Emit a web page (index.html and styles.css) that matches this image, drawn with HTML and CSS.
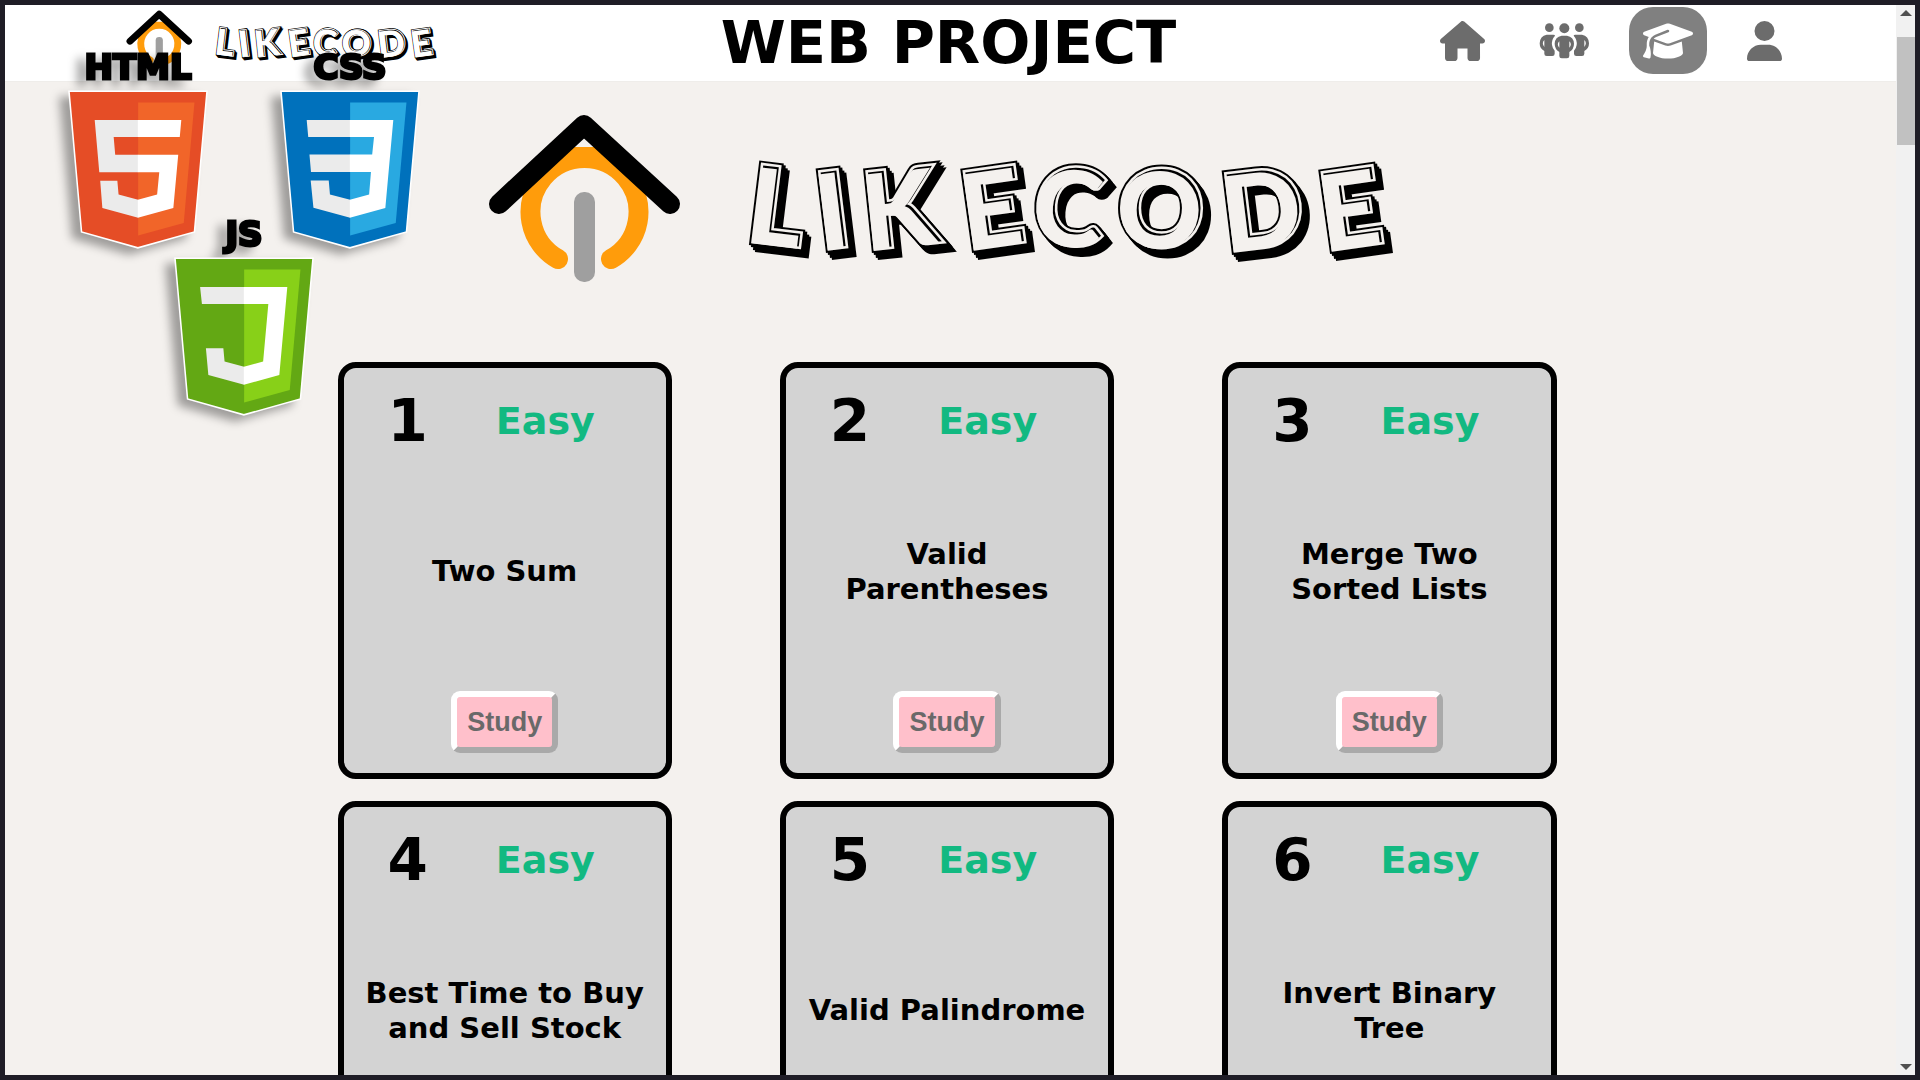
FILE: index.html
```
<!DOCTYPE html>
<html lang="en">
<head>
<meta charset="utf-8">
<meta name="viewport" content="width=device-width, initial-scale=1">
<title>LikeCode - Web Project</title>
<link rel="stylesheet" href="styles.css">
</head>
<body>
<svg class="sprite" aria-hidden="true">
  <defs>
    <text id="word" x="257 333 379 479 543 630 739 837" y="130 139 139 139 131 136 141 140" rotate="7 -7 -6 -8 5 0 -7 -8">LIKECODE</text>
    <symbol id="logo" viewBox="0 0 904 175">
      <path d="M84 37H106L150 78H40z" fill="#ff9c0b"/>
      <circle class="paper" cx="95" cy="101" r="46"/>
      <path d="M69 149A54 54 0 1 1 122 149" fill="none" stroke="#ff9c0b" stroke-width="20" stroke-linecap="round"/>
      <path d="M10 94 95 15 181 94" fill="none" stroke="#000" stroke-width="20" stroke-linecap="round" stroke-linejoin="round"/>
      <rect x="85" y="82" width="21" height="90" rx="10" fill="#9f9f9f"/>
      <g class="word">
        <use class="word-edge" href="#word" x="6" y="7"/>
        <use class="word-edge" href="#word" x="4" y="5"/>
        <use class="word-edge" href="#word" x="2" y="2"/>
        <use class="word-edge" href="#word"/>
        <use class="word-face" href="#word"/>
        <use class="word-line" href="#word"/>
        <use class="word-fill" href="#word" x="-2" y="2"/>
      </g>
    </symbol>
  </defs>
</svg>

<div class="window">
  <div class="page">
    <header class="topbar">
      <a class="brand" href="#" aria-label="LikeCode"><svg class="brand-logo"><use href="#logo"/></svg></a>
      <h1 class="title">WEB PROJECT</h1>
      <nav class="menu">
        <a class="menu-item" href="#" aria-label="Home"><svg width="45" height="40" viewBox="0 0 576 512"><path d="M575.8 255.5c0 18-15 32.1-32 32.1h-32l.7 184.4c0 22.1-17.9 40-40 40H392c-22.1 0-40-17.9-40-40V352H224v120c0 22.1-17.900 40-40 40h-80c-22.1 0-40-17.9-40-40V287.6H32c-18 0-32-14-32-32.1 0-9 3-17 10-24L266.4 8c7-7 15-8 22-8s15 2 21 7l255.4 224.500c8 7 12 15 11 24z"/></svg></a>
        <a class="menu-item" href="#" aria-label="Community"><svg width="50" height="40" viewBox="0 0 150 120">
          <circle cx="31" cy="20" r="13"/><circle cx="76" cy="22" r="15"/><circle cx="121" cy="20" r="13"/>
          <path fill-rule="evenodd" d="M23 41H43Q48 41 48 44Q37 56 39 72Q41 84 47 89V98Q47 105 40 105H23Q16 105 16 98V90Q2 83 2 67Q3 44 23 41zM16 57Q7 66 16 78z"/>
          <path fill-rule="evenodd" d="M129 41H109Q104 41 104 44Q115 56 113 72Q111 84 105 89V98Q105 105 112 105H129Q136 105 136 98V90Q150 83 150 67Q149 44 129 41zM136 57Q145 66 136 78z"/>
          <path fill-rule="evenodd" d="M68 44H84Q104 47 105 68Q105 84 91 93V105Q91 112 84 112H68Q61 112 61 105V93Q47 84 47 68Q48 47 68 44zM61 61Q52 70 61 80zM91 61V80Q100 70 91 61z"/>
        </svg></a>
        <a class="menu-item is-active" href="#" aria-label="Study" aria-current="page"><svg width="50" height="40" viewBox="0 0 640 512"><path d="M320 32c-8.100 0-16.100 1.400-23.700 4.100L15.800 137.400C6.300 140.900 0 149.900 0 160s6.300 19.100 15.800 22.600l57.900 20.900C57.300 229.300 48 259.800 48 291.900v28.100c0 28.400-10.800 57.700-22.300 80.800-6.500 13-13.900 25.800-22.500 37.600C0 442.700-.9 448.300.9 453.400s6 8.900 11.200 10.200l64 16c4.200 1.100 8.700.3 12.400-2s6.300-6.100 7.100-10.400c8.600-42.800 4.300-81.200-2.100-108.700C90.300 344.300 86 329.800 80 316.500V291.900c0-30.200 10.200-58.700 27.900-81.500 12.900-15.500 29.600-28 49.200-35.700l157-61.700c8.200-3.200 17.500.8 20.700 9s-.8 17.500-9 20.700l-157 61.700c-12.400 4.900-23.300 12.400-32.200 21.600l159.600 57.600c7.600 2.700 15.600 4.100 23.700 4.100s16.100-1.400 23.700-4.100L624.200 182.600c9.500-3.400 15.800-12.500 15.800-22.600s-6.300-19.100-15.800-22.600L343.700 36.100C336.100 33.400 328.100 32 320 32zM128 408c0 35.300 86 72 192 72s192-36.700 192-72L496.700 262.600 354.500 314c-11.100 4-22.800 6-34.500 6s-23.500-2-34.500-6L143.300 262.600 128 408z"/></svg></a>
        <a class="menu-item" href="#" aria-label="Profile"><svg width="35" height="40" viewBox="0 0 448 512"><path d="M224 256A128 128 0 1 0 224 0a128 128 0 1 0 0 256zm-45.700 48C79.800 304 0 383.800 0 482.300 0 498.700 13.300 512 29.700 512H418.300c16.400 0 29.700-13.300 29.700-29.700C448 383.800 368.200 304 269.700 304H178.300z"/></svg></a>
      </nav>
    </header>

    <div class="badges">
      <figure class="badge badge-html">
        <figcaption>HTML</figcaption>
        <svg viewBox="30 0 451 512" aria-hidden="true">
          <path class="rim" d="M71 460 30 0H481L440 460 255 512z" fill="#e54d26"/>
          <path d="M256 472 405 431 440 37H256z" fill="#f16529"/>
          <path d="M256 208H181L176 150H256V94H114L129 265H256zM256 355 192 338 188 293H132L139 382 256 414z" fill="#ebebeb"/>
          <path d="M255 208V265H325L318 338 255 355V414L371 382 387 208zM255 94V150H392L397 94z" fill="#fff"/>
        </svg>
      </figure>
      <figure class="badge badge-js">
        <figcaption>JS</figcaption>
        <svg viewBox="30 0 451 512" aria-hidden="true">
          <path class="rim" d="M71 460 30 0H481L440 460 255 512z" fill="#63a814"/>
          <path d="M256 472 405 431 440 37H256z" fill="#88d018"/>
          <path d="M256 94H112L118 150H256zM256 355 192 338 188 294H131L139 382 256 414z" fill="#ebebeb"/>
          <path d="M255 94H397L371 382 255 414V355L318 338 335 150H255z" fill="#fff"/>
        </svg>
      </figure>
      <figure class="badge badge-css">
        <figcaption>CSS</figcaption>
        <svg viewBox="30 0 451 512" aria-hidden="true">
          <path class="rim" d="M71 460 30 0H481L440 460 255 512z" fill="#0071bc"/>
          <path d="M256 472 405 431 440 37H256z" fill="#29a9e1"/>
          <path d="M256 94H114L119 150H256zM256 207H123L128 264H256zM256 355 190 338 186 292H127L136 381 256 414z" fill="#ebebeb"/>
          <path d="M255 94H397L371 382 255 414V355L318 338 324 264H255V207H328L334 150H255z" fill="#fff"/>
        </svg>
      </figure>
    </div>

    <main>
      <section class="hero"><svg class="hero-logo" role="img" aria-label="LikeCode"><use href="#logo"/></svg></section>
      <section class="cards">
        <article class="card">
          <div class="card-head"><span class="number">1</span><span class="level">Easy</span></div>
          <h2 class="card-title">Two Sum</h2>
          <button class="study" type="button">Study</button>
        </article>
        <article class="card">
          <div class="card-head"><span class="number">2</span><span class="level">Easy</span></div>
          <h2 class="card-title">Valid Parentheses</h2>
          <button class="study" type="button">Study</button>
        </article>
        <article class="card">
          <div class="card-head"><span class="number">3</span><span class="level">Easy</span></div>
          <h2 class="card-title">Merge Two Sorted Lists</h2>
          <button class="study" type="button">Study</button>
        </article>
        <article class="card">
          <div class="card-head"><span class="number">4</span><span class="level">Easy</span></div>
          <h2 class="card-title">Best Time to Buy and Sell Stock</h2>
          <button class="study" type="button">Study</button>
        </article>
        <article class="card">
          <div class="card-head"><span class="number">5</span><span class="level">Easy</span></div>
          <h2 class="card-title">Valid Palindrome</h2>
          <button class="study" type="button">Study</button>
        </article>
        <article class="card">
          <div class="card-head"><span class="number">6</span><span class="level">Easy</span></div>
          <h2 class="card-title">Invert Binary Tree</h2>
          <button class="study" type="button">Study</button>
        </article>
      </section>
    </main>
  </div>
  <div class="scrollbar" aria-hidden="true">
    <span class="arrow arrow-up"></span>
    <span class="thumb"></span>
    <span class="arrow arrow-down"></span>
  </div>
</div>
</body>
</html>
```

FILE: styles.css
```
* {
  box-sizing: border-box;
}

body {
  margin: 0;
  background: #1f1d26;
  color: #000;
  font-family: Verdana, "DejaVu Sans", sans-serif;
}

.sprite {
  position: absolute;
  width: 0;
  height: 0;
}

.window {
  display: flex;
  height: 100vh;
  padding: 5px;
}

.page {
  --paper: #f4f1ee;
  position: relative;
  flex: 1;
  min-width: 0;
  overflow: hidden;
  background: var(--paper);
}

/* Top bar */
.topbar {
  --paper: #fff;
  display: grid;
  grid-template-columns: 1fr auto 1fr;
  align-items: start;
  height: 77px;
  padding: 2px 100px 0 96px;
  background: #fff;
  border-bottom: 1px solid #efedea;
}

.brand {
  padding: 2px 0 0 24px;
}

.brand-logo {
  display: block;
  width: 313px;
  height: 60px;
}

.title {
  margin: 0;
  font-size: 59px;
  line-height: 72px;
}

.menu {
  display: flex;
  justify-content: flex-end;
  gap: 26px;
}

.menu-item {
  display: flex;
  align-items: center;
  height: 67px;
  padding: 0 14px;
  border-radius: 24px;
  fill: #6c6c6c;
}

.menu-item.is-active {
  background: #808080;
  fill: #fff;
}

/* Logo wordmark */
.paper {
  fill: var(--paper);
}

.word {
  font-family: Lato, sans-serif;
  font-size: 105px;
  font-weight: 900;
}

.word-edge {
  fill: #000;
  stroke: #000;
  stroke-width: 9px;
}

.word-face {
  fill: var(--paper);
  stroke: var(--paper);
  stroke-width: 5px;
}

.word-line {
  fill: #000;
}

.word-fill {
  fill: var(--paper);
}

/* Technology shields, floating over the top bar and the hero */
.badges {
  position: absolute;
  top: 49px;
  left: 64px;
  display: grid;
  grid-template-columns: 106px 106px 138px;
  align-items: start;
  pointer-events: none;
}

.badge {
  grid-row: 1;
  width: 138px;
  margin: 0;
  filter: drop-shadow(-9px 6px 5px rgba(0, 0, 0, 0.35));
}

.badge-html {
  grid-column: 1;
}

.badge-js {
  grid-column: 2;
  margin-top: 167px;
}

.badge-css {
  grid-column: 3;
}

.badge figcaption {
  margin-bottom: 11px;
  font-family: "DejaVu Sans", sans-serif;
  font-size: 34px;
  font-weight: 700;
  line-height: 26px;
  text-align: center;
  -webkit-text-stroke: 3px #000;
}

.badge svg {
  display: block;
  width: 138px;
  height: 157px;
  overflow: visible;
}

.rim {
  stroke: #fff;
  stroke-width: 5px;
}

/* Hero */
.hero {
  display: flex;
  justify-content: center;
  padding: 28px 19px 77px 0;
}

.hero-logo {
  width: 904px;
  height: 175px;
}

/* Problem cards */
.cards {
  display: grid;
  grid-template-columns: repeat(3, 1fr);
  gap: 22px 108px;
  max-width: 1226px;
  margin: 0 auto;
  padding-right: 7px;
}

.card {
  display: flex;
  flex-direction: column;
  align-items: center;
  min-height: 417px;
  padding: 18px 16px 20px;
  background: #d3d3d3;
  border: 6px solid #000;
  border-radius: 18px;
}

.card-head {
  display: flex;
  align-items: center;
  gap: 68px;
  align-self: stretch;
  height: 70px;
  padding-left: 28px;
  font-weight: 700;
}

.number {
  font-size: 58px;
}

.level {
  color: #12b981;
  font-size: 38px;
}

.card-title {
  display: flex;
  flex: 1;
  align-items: center;
  margin: 0 0 4px;
  font-size: 29px;
  line-height: 35px;
  text-align: center;
}

.study {
  height: 62px;
  padding: 0 10px;
  background: #ffc0cb;
  border: 6px solid;
  border-color: #fff #a9a9a9 #a9a9a9 #fff;
  border-radius: 9px;
  color: #696969;
  font: 700 27px "Liberation Sans", Arial, sans-serif;
}

/* Scrollbar */
.scrollbar {
  display: flex;
  flex-direction: column;
  align-items: center;
  width: 19px;
  padding: 5px 0;
  background: #f1f1f1;
}

.arrow {
  border: 6px solid transparent;
}

.arrow-up {
  border-top-width: 0;
  border-bottom-color: #505050;
}

.arrow-down {
  margin-top: auto;
  border-bottom-width: 0;
  border-top-color: #505050;
}

.thumb {
  width: 18px;
  height: 108px;
  margin-top: 21px;
  background: #c1c1c1;
}
```
